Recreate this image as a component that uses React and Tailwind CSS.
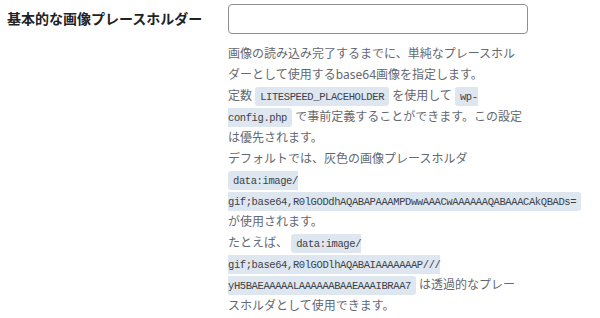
const Code = ({ children }) => (
  <code className="rounded-[3px] bg-[#dee6f0] px-[5px] pt-[4px] pb-[3px] font-['Liberation_Mono',monospace] text-[10.5px] leading-[10px] tracking-[-0.4px] text-[#3c434a]">
    {children}
  </code>
)

export default function App() {
  return (
    <div className="flex min-h-[318px] bg-white font-['Noto_Sans','Noto_Sans_CJK_JP',sans-serif]">
      <div className="w-[228px] shrink-0 pl-[7px] pt-[6px]">
        <span className="text-[14px] font-bold leading-[20px] text-[#1d2327]">
          基本的な画像プレースホルダー
        </span>
      </div>
      <div className="pt-[4px]">
        <input
          type="text"
          className="block h-[30px] w-[300px] rounded-[4px] border border-[#8c8f94] bg-white px-2 text-[14px] outline-none"
        />
        <p className="mt-[9px] w-[298px] text-[12px] leading-[21px] text-[#646970]">
          画像の読み込み完了するまでに、単純なプレースホルダーとして使用するbase64画像を指定します。
          <br />
          定数 <Code>LITESPEED_PLACEHOLDER</Code> を使用して <Code>wp-config.php</Code> で事前定義することができます。この設定は優先されます。
          <br />
          デフォルトでは、灰色の画像プレースホルダ <Code>data:image/<wbr />gif;base64,R0lGODdhAQABAPAAAMPDwwAAACwAAAAAAQABAAACAkQBADs=</Code> が使用されます。
          <br />
          たとえば、 <Code>data:image/<wbr />gif;base64,R0lGODlhAQABAIAAAAAAAP///<wbr />yH5BAEAAAAALAAAAAABAAEAAAIBRAA7</Code> は透過的なプレースホルダとして使用できます。
        </p>
      </div>
    </div>
  )
}
